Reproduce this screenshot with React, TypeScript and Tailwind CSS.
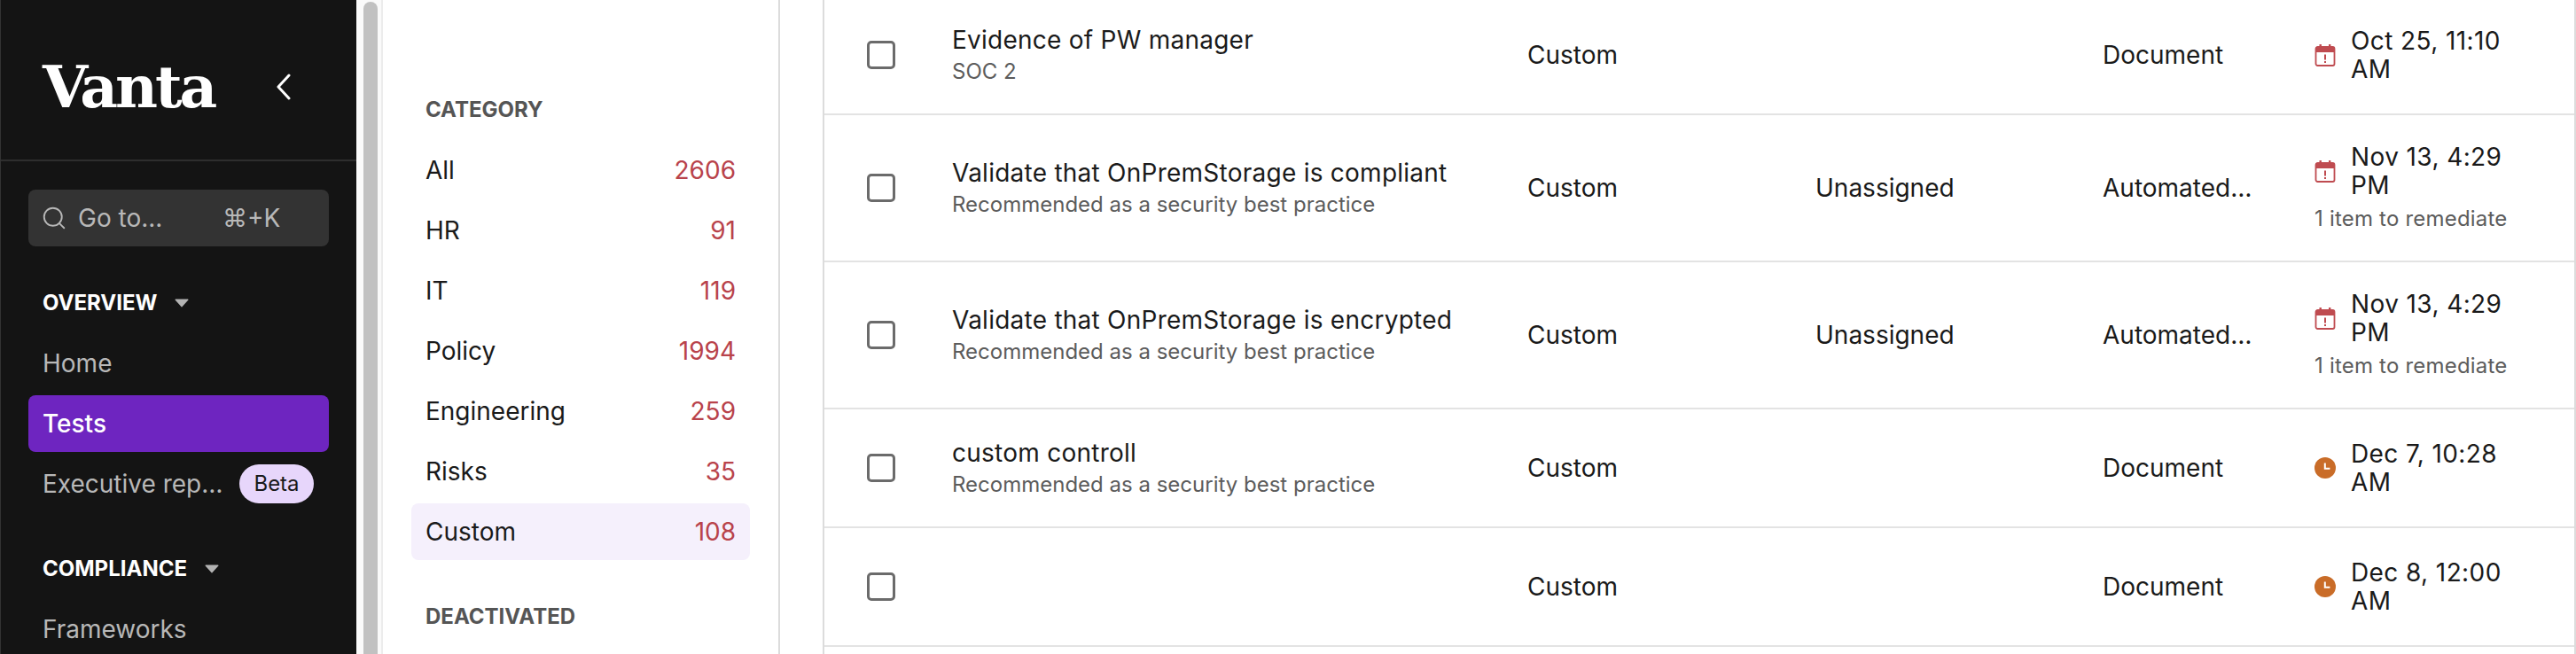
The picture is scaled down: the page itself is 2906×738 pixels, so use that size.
import { Search } from "lucide-react";

const categories = [
  { name: "All", count: 2606 },
  { name: "HR", count: 91 },
  { name: "IT", count: 119 },
  { name: "Policy", count: 1994 },
  { name: "Engineering", count: 259 },
  { name: "Risks", count: 35 },
  { name: "Custom", count: 108, active: true },
];

const rows = [
  {
    height: "h-[134px]",
    title: "Evidence of PW manager",
    sub: "SOC 2",
    owner: "",
    type: "Document",
    date: "Oct 25, 11:10 AM",
    icon: "calendar",
  },
  {
    height: "h-[166px]",
    title: "Validate that OnPremStorage is compliant",
    sub: "Recommended as a security best practice",
    owner: "Unassigned",
    type: "Automated tests",
    date: "Nov 13, 4:29 PM",
    icon: "calendar",
    note: "1 item to remediate",
  },
  {
    height: "h-[166px]",
    title: "Validate that OnPremStorage is encrypted",
    sub: "Recommended as a security best practice",
    owner: "Unassigned",
    type: "Automated tests",
    date: "Nov 13, 4:29 PM",
    icon: "calendar",
    note: "1 item to remediate",
  },
  {
    height: "h-[134px]",
    title: "custom controll",
    sub: "Recommended as a security best practice",
    owner: "",
    type: "Document",
    date: "Dec 7, 10:28 AM",
    icon: "clock",
  },
  {
    height: "h-[134px]",
    title: "",
    sub: "",
    owner: "",
    type: "Document",
    date: "Dec 8, 12:00 AM",
    icon: "clock",
  },
];

function Caret() {
  return (
    <svg width="16" height="10" viewBox="0 0 16 10" className="shrink-0">
      <path d="M1 0.5h14a0.6 0.6 0 0 1 .4 1L8.4 9.2a0.6 0.6 0 0 1-.8 0L.6 1.5a0.6 0.6 0 0 1 .4-1z" fill="#b3b3b3" />
    </svg>
  );
}

function CalendarIcon() {
  return (
    <svg width="24" height="26" viewBox="0 0 24 26">
      <path
        d="M3.5 4h17a2 2 0 0 1 2 2v17a2 2 0 0 1-2 2h-17a2 2 0 0 1-2-2V6a2 2 0 0 1 2-2z"
        fill="none"
        stroke="#bf4b50"
        strokeWidth="1.8"
      />
      <path d="M3 4h18a2 2 0 0 1 2 2v4H1V6a2 2 0 0 1 2-2z" fill="#bf4b50" />
      <rect x="5.5" y="1" width="2.4" height="4" fill="#bf4b50" />
      <rect x="16" y="1" width="2.4" height="4" fill="#bf4b50" />
      <rect x="11" y="12.5" width="2" height="6" fill="#bf4b50" />
      <rect x="11" y="20" width="2" height="2" fill="#bf4b50" />
    </svg>
  );
}

function ClockIcon() {
  return (
    <svg width="24" height="24" viewBox="0 0 24 24">
      <circle cx="12" cy="12" r="12" fill="#c96c28" />
      <path d="M11.8 6.5v6.2h5.6" fill="none" stroke="#ffffff" strokeWidth="2" />
    </svg>
  );
}

function NavLabel({ children }: any) {
  return (
    <div className="mt-[44px] mb-[16px] flex h-[40px] items-center gap-[20px] px-4 text-[24px] font-bold text-white">
      <span>{children}</span>
      <Caret />
    </div>
  );
}

function Sidebar() {
  return (
    <aside className="w-[402px] shrink-0 border-l border-[#333333] bg-[#141414] text-[28px] text-[#b8b8b8]">
      <div className="flex h-[182px] items-center border-b-2 border-[#2e2e2e] pt-[16px] pl-[47px]">
        <span className="w-[263px] font-['DejaVu_Serif',serif] text-[66px] font-bold tracking-[-3px] text-white">
          Vanta
        </span>
        <svg width="18" height="30" viewBox="0 0 18 30" fill="none" stroke="#ffffff" strokeWidth="3" strokeLinecap="round" strokeLinejoin="round">
          <path d="M15 2 3 15l12 13" />
        </svg>
      </div>
      <div className="px-[31px]">
        <div className="mt-[32px] flex h-[64px] items-center rounded-lg bg-[#333333] pl-[14px]">
          <Search size={30} strokeWidth={1.5} className="shrink-0" />
          <span className="ml-[12px] w-[163px]">Go to...</span>
          <span>⌘+K</span>
        </div>
        <NavLabel>OVERVIEW</NavLabel>
        <div className="flex flex-col gap-1">
          <div className="flex h-[64px] items-center px-4">Home</div>
          <div className="flex h-[64px] items-center rounded-lg bg-[#6e25c0] px-4 font-medium text-white">Tests</div>
          <div className="flex h-[64px] items-center pl-4">
            <span className="w-[206px] truncate">Executive reports</span>
            <span className="ml-[16px] flex h-[44px] w-[84px] items-center justify-center rounded-full bg-[#e7d6fb] text-[24px] text-[#1a1a1a]">
              Beta
            </span>
          </div>
        </div>
        <NavLabel>COMPLIANCE</NavLabel>
        <div className="flex h-[64px] items-center px-4">Frameworks</div>
      </div>
    </aside>
  );
}

function CategoryPanel() {
  return (
    <section className="w-[448px] shrink-0 border-r-2 border-[#dcdcdc] px-8 pt-[104px]">
      <div className="mb-[16px] flex h-[40px] items-center px-4 text-[24px] font-bold text-[#555555]">CATEGORY</div>
      <div className="flex flex-col gap-1">
        {categories.map((c) => (
          <div
            key={c.name}
            className={`flex h-[64px] items-center justify-between rounded-lg px-4 text-[28px] ${c.active ? "bg-[#f5f0fc]" : ""}`}
          >
            <span className="text-[#1a1a1a]">{c.name}</span>
            <span className="text-[#b9434b]">{c.count}</span>
          </div>
        ))}
      </div>
      <div className="mt-[44px] flex h-[40px] items-center px-4 text-[24px] font-bold text-[#555555]">DEACTIVATED</div>
    </section>
  );
}

function TestRow({ row }: any) {
  return (
    <div className={`grid grid-cols-[144px_649px_325px_324px_239px_1fr] items-center border-b-2 border-[#e3e3e3] text-[28px] text-[#1a1a1a] ${row.height}`}>
      <div className="pl-[48px]">
        <div className="h-[32px] w-[32px] rounded-[5px] border-[3px] border-[#6b6b6b]" />
      </div>
      <div>
        {row.title && <div className="leading-[36px] tracking-[0.25px]">{row.title}</div>}
        {row.sub && <div className="mt-[2px] text-[24px] leading-[32px] text-[#5c5c5c]">{row.sub}</div>}
      </div>
      <div>Custom</div>
      <div>{row.owner}</div>
      <div className="w-[176px] truncate">{row.type}</div>
      <div>
        <div className="flex items-center">
          <div className="w-[41px] shrink-0">{row.icon === "calendar" ? <CalendarIcon /> : <ClockIcon />}</div>
          <div className="w-[200px] leading-[32px] tracking-[0.4px]">{row.date}</div>
        </div>
        {row.note && <div className="mt-[6px] text-[24px] leading-[32px] tracking-[0.2px] text-[#5c5c5c]">{row.note}</div>}
      </div>
    </div>
  );
}

export default function App() {
  return (
    <div className="flex h-screen overflow-hidden bg-white font-['Inter',sans-serif]">
      <Sidebar />
      {/* page scrollbar between the nav and the content */}
      <div className="w-[30px] shrink-0 border-r-2 border-[#ececec] bg-[#fafafa] pt-[2px] pl-2">
        <div className="h-full w-4 rounded-t-lg bg-[#c1c1c1]" />
      </div>
      <CategoryPanel />
      <main className="ml-12 min-w-0 flex-1 border-x-2 border-[#dcdcdc]">
        <div className="-mt-1">
          {rows.map((row, i) => (
            <TestRow key={i} row={row} />
          ))}
        </div>
      </main>
    </div>
  );
}
